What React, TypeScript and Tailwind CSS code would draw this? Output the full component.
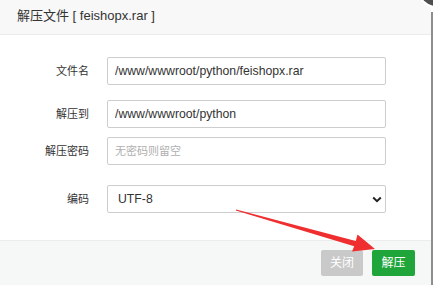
const font = { fontFamily: '"Liberation Sans", "Noto Sans CJK SC", sans-serif' };

function Row({ label, children, className }: { label: string; children: React.ReactNode; className?: string }) {
  return (
    <div className={`flex items-center ${className ?? ''}`}>
      <div className="w-[89px] shrink-0 text-right text-[11px] text-[#333]">{label}</div>
      <div className="ml-[18px] w-[279px]">{children}</div>
    </div>
  );
}

export default function App() {
  return (
    <div className="relative w-[433px] h-[285px] overflow-hidden bg-white flex" style={font}>
      {/* dialog */}
      <div className="w-[431px] h-full flex flex-col">
        <div className="h-[35px] shrink-0 bg-[#f8f8f8] border-b border-[#ececec] pl-[17px] pb-[3px] flex items-center text-[13px] text-[#333]">
          解压文件 [ feishopx.rar ]
        </div>

        <div className="flex-1 pt-[22px]">
          <Row label="文件名">
            <input
              readOnly
              value="/www/wwwroot/python/feishopx.rar"
              className="w-full h-[28px] border border-[#cdcdcd] rounded-[2px] px-[7px] text-[12.25px] text-[#333] outline-none"
              style={font}
            />
          </Row>
          <Row label="解压到" className="mt-[15px]">
            <input
              readOnly
              value="/www/wwwroot/python"
              className="w-full h-[28px] border border-[#cdcdcd] rounded-[2px] px-[7px] text-[12.25px] text-[#333] outline-none"
              style={font}
            />
          </Row>
          <Row label="解压密码" className="mt-[9px]">
            <input
              readOnly
              placeholder="无密码则留空"
              className="w-full h-[28px] border border-[#cdcdcd] rounded-[2px] px-[7px] text-[11px] text-[#333] placeholder:text-[#b0b0b0] outline-none"
              style={font}
            />
          </Row>
          <Row label="编码" className="mt-[20px]">
            <div className="w-full h-[28px] border border-[#cdcdcd] rounded-[2px] pl-[10px] pr-[3px] flex items-center justify-between text-[12.25px] text-[#333]">
              <span>UTF-8</span>
              <svg width="10" height="7" viewBox="0 0 10 7">
                <path d="M1.2 1.5 L5 5.2 L8.8 1.5" fill="none" stroke="#222" strokeWidth="2" />
              </svg>
            </div>
          </Row>
        </div>

        <div className="h-[45px] shrink-0 bg-[#f6f7f7] border-t border-[#ececec] pt-[9px] pr-[16px] flex justify-end items-start gap-[9px]">
          <button className="w-[42px] h-[26px] rounded-[2px] bg-[#c9c9c9] text-white text-[12px]">关闭</button>
          <button className="w-[43px] h-[26px] rounded-[2px] bg-[#20a53a] text-white text-[12px]">解压</button>
        </div>
      </div>

      {/* right edge of the window behind */}
      <div className="w-[2px] mt-[12px] bg-[#8e8e8e]" />

      {/* layer close button, mostly outside the view */}
      <div className="absolute left-[418px] top-[-28px] w-[36px] h-[36px] rounded-full bg-[#4f4f4f] border-2 border-white" />

      {/* red annotation arrow */}
      <svg className="absolute left-0 top-0 pointer-events-none" width="433" height="285" viewBox="0 0 433 285">
        <polygon
          points="235.8,210.6 236.2,209.4 355.8,241 357.5,234.5 375,249 352,251.5 354.2,246.3"
          fill="#ef2f2f"
        />
      </svg>
    </div>
  );
}
